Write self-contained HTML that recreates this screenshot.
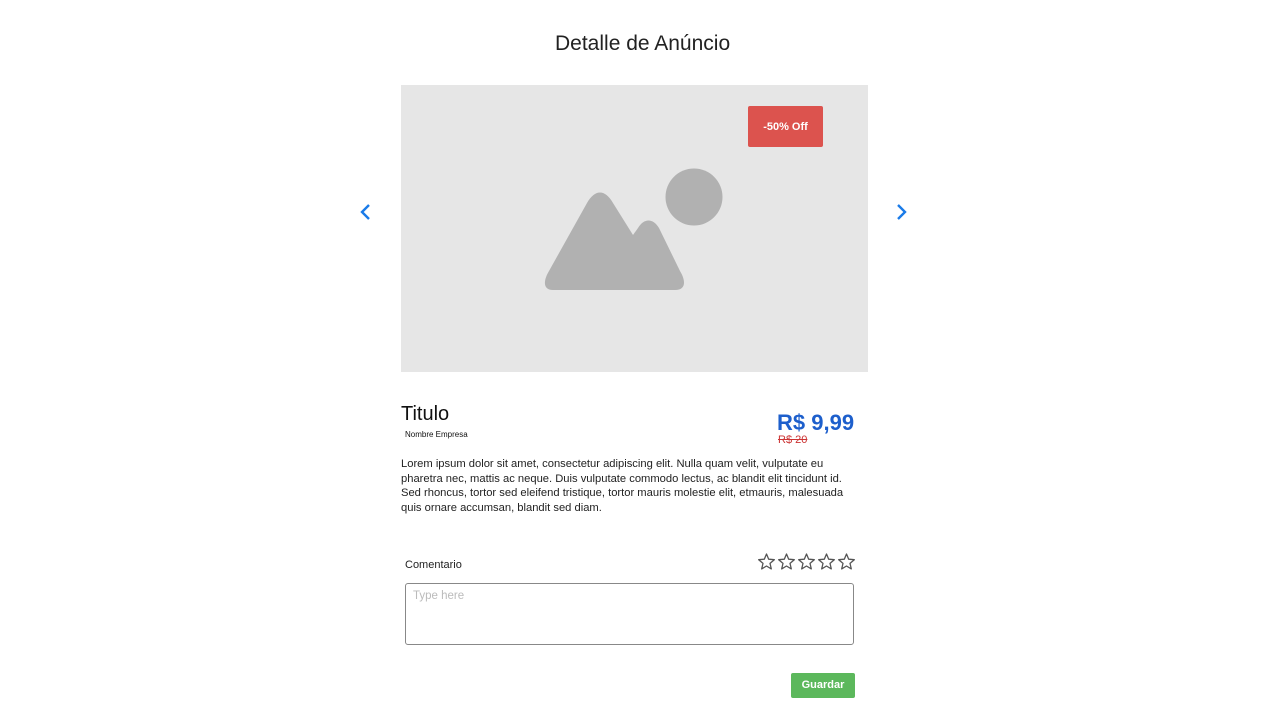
<!DOCTYPE html>
<html><head><meta charset="utf-8"><style>
body{margin:0;width:1280px;height:720px;background:#fff;font-family:"Liberation Sans",sans-serif;position:relative;overflow:hidden}
.a{position:absolute}
</style></head><body>
<div class="a" style="left:555px;top:32px;font-size:21px;color:#222;white-space:nowrap">Detalle de Anúncio</div>
<div class="a" style="left:401px;top:85px;width:467px;height:287px;background:#e6e6e6">
<svg class="a" style="left:0;top:0" width="467" height="287">
<path d="M152 205 C142 205 142 196 148 186 L186 118 C194 104 204 104 212 118 L232 150 L237 143 C243 133 252 133 258 143 L279 186 C285 196 285 205 274 205 Z" fill="#b1b1b1"/>
<circle cx="293" cy="112" r="28.5" fill="#b1b1b1"/>
</svg>
<div class="a" style="left:347px;top:21px;width:75px;height:41px;background:#dc534e;border-radius:2px;color:#fff;font-size:11px;font-weight:bold;line-height:43px;text-align:center">-50% Off</div>
</div>
<svg class="a" style="left:358px;top:203px" width="16" height="18"><path d="M11 2 L4 9 L11 16" stroke="#1a7be8" stroke-width="2.4" fill="none"/></svg>
<svg class="a" style="left:894px;top:203px" width="16" height="18"><path d="M4 2 L11 9 L4 16" stroke="#1a7be8" stroke-width="2.4" fill="none"/></svg>
<div class="a" style="left:401px;top:403px;font-size:20px;color:#111">Titulo</div>
<div class="a" style="left:405px;top:430px;font-size:8px;color:#111">Nombre Empresa</div>
<div class="a" style="left:777px;top:410px;font-size:22px;font-weight:bold;color:#1d5fcc">R$ 9,99</div>
<div class="a" style="left:778px;top:434px;font-size:11px;color:#c33;text-decoration:line-through">R$ 20</div>
<div class="a" style="left:401px;top:457px;width:460px;font-size:11.2px;line-height:14.6px;color:#222">Lorem ipsum dolor sit amet, consectetur adipiscing elit. Nulla quam velit, vulputate eu pharetra nec, mattis ac neque. Duis vulputate commodo lectus, ac blandit elit tincidunt id. Sed rhoncus, tortor sed eleifend tristique, tortor mauris molestie elit, etmauris, malesuada quis ornare accumsan, blandit sed diam.</div>
<div class="a" style="left:405px;top:559px;font-size:11px;color:#222">Comentario</div>
<svg class="a" style="left:757px;top:553px" width="100" height="20">
<defs><path id="s" d="M8.5 1 L10.7 6.2 L16.3 6.7 L12 10.4 L13.3 15.9 L8.5 13 L3.7 15.9 L5 10.4 L0.7 6.7 L6.3 6.2 Z" fill="none" stroke="#555" stroke-width="1.3" stroke-linejoin="round"/></defs>
<use href="#s" x="1"/><use href="#s" x="21"/><use href="#s" x="41"/><use href="#s" x="61"/><use href="#s" x="81"/>
</svg>
<div class="a" style="left:405px;top:583px;width:447px;height:60px;border:1.5px solid #888;border-radius:3px"></div>
<div class="a" style="left:413px;top:590px;font-size:11.5px;color:#bbb">Type here</div>
<div class="a" style="left:791px;top:673px;width:64px;height:25px;background:#5cb85c;border-radius:2px;color:#fff;font-size:11px;font-weight:bold;line-height:25px;text-align:center">Guardar</div>
</body></html>
